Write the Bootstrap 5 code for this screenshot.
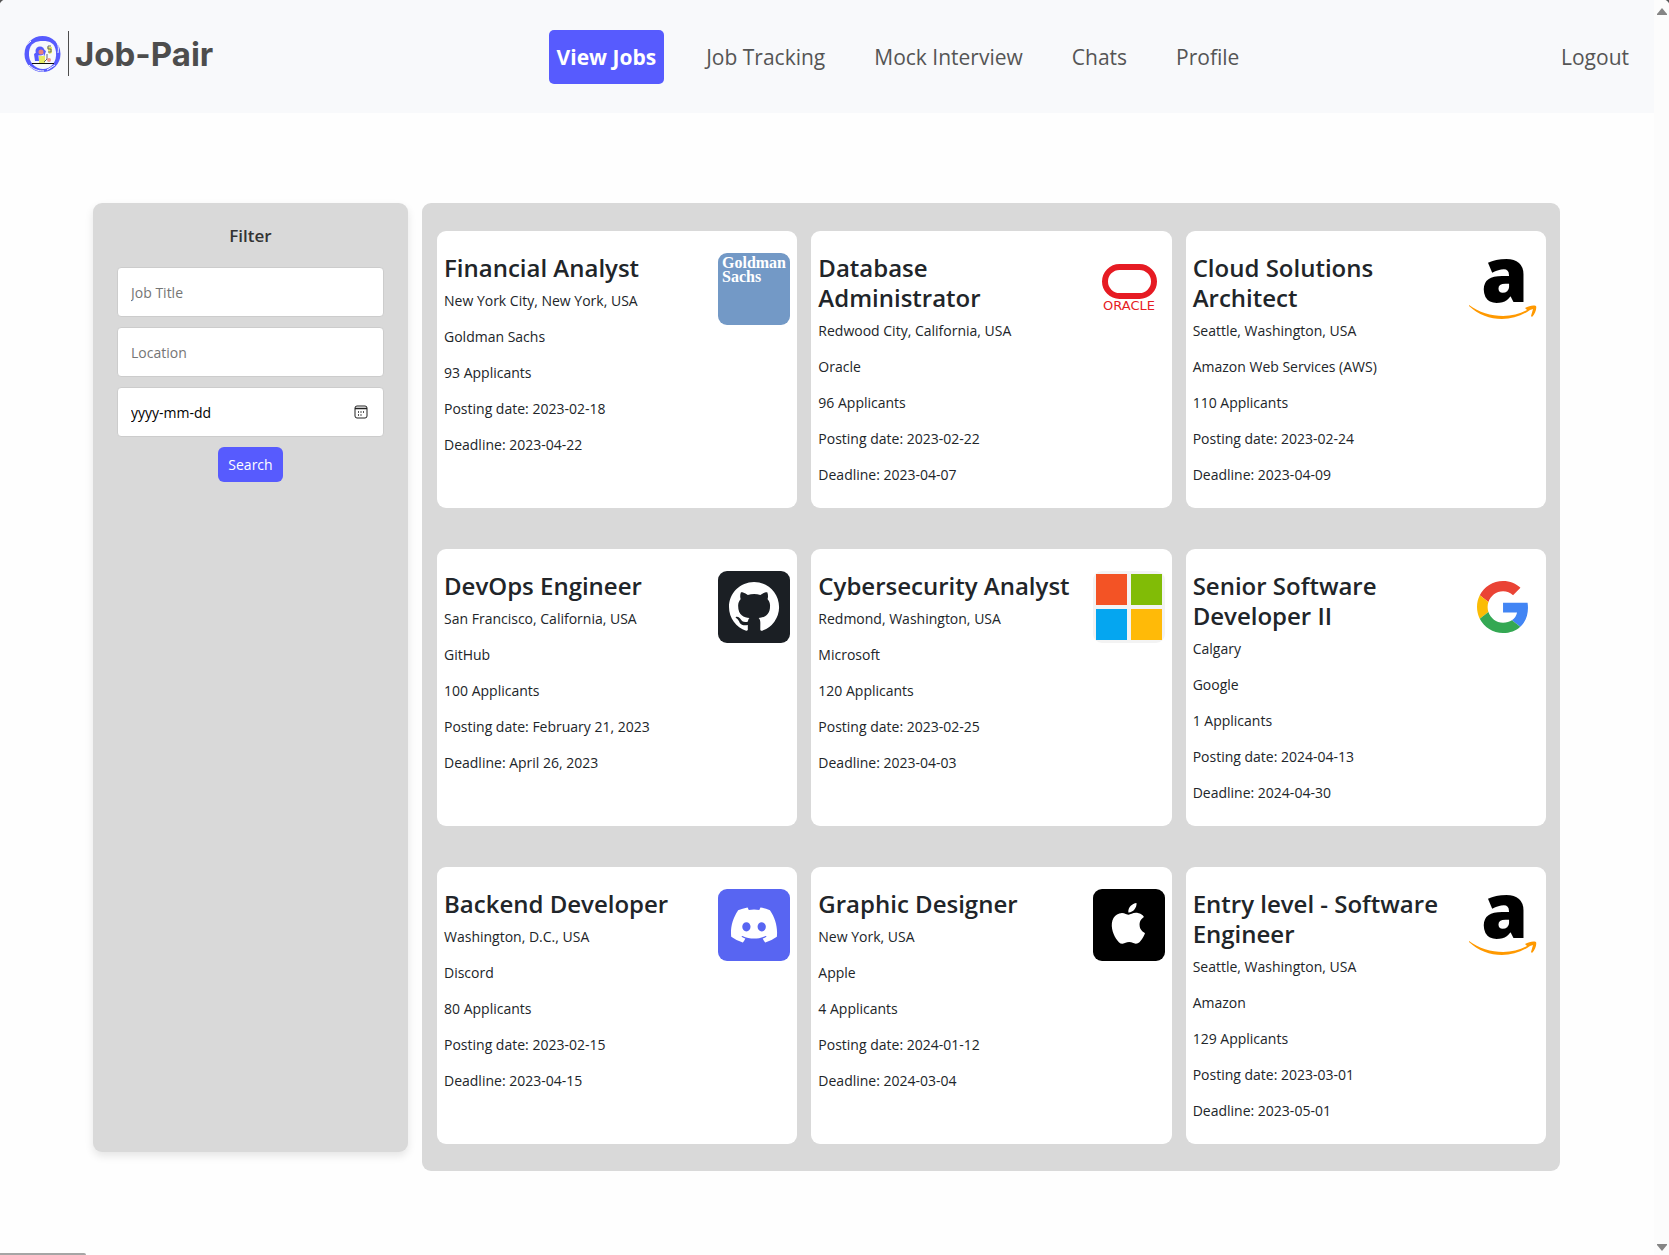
<!DOCTYPE html>
<html lang="en">
<head>
<meta charset="utf-8">
<meta name="viewport" content="width=device-width, initial-scale=1">
<title>Job-Pair</title>
<link href="https://cdn.jsdelivr.net/npm/bootstrap@5.3.0/dist/css/bootstrap.min.css" rel="stylesheet">
<style>
  body { font-family: "Open Sans", "Noto Sans", sans-serif; font-size: 14px; line-height: 22px; color: #212529; background: #fefefe; }
  .topbar { background: #f8f9fb; height: 113px; padding: 0 25px 0 24px; }
  .brand-link { color: #4d4d4d; font: 700 33px/40px Inter, sans-serif; width: 210px; gap: 6px; margin-bottom: 6px; }
  .brand-rule { width: 1px; height: 45px; background: #4d4d4d; }
  .main-nav { gap: 35px; }
  .main-nav .nav-link, .logout-link { font-size: 21px; line-height: 30px; padding: 12px 7px; color: #555; border-radius: 5px; }
  .main-nav .nav-link.active { background: #575bfe; color: #fff; font-weight: 700; padding: 12px 8px; }
  .page-main { padding: 90px 94px 84px 93px; gap: 14px; }
  .filter-panel { flex: 0 0 315px; background: #d9d9d9; border-radius: 9px; padding: 22px 24px; margin-bottom: 19px; box-shadow: 0 4px 8px rgba(0,0,0,.1); gap: 10px; }
  .filter-panel h2 { font-size: 17px; line-height: 22px; font-weight: 600; color: #333; margin: 0 0 10px; }
  .filter-panel .form-control { height: 50px; padding: 0 13px; font-size: 14px; border: 1px solid #ccc; border-radius: 4px; background: #fff; }
  .filter-panel .form-control::placeholder { color: #757575; }
  .filter-panel .date-field::placeholder { color: #000; }
  .date-icon { right: 16px; top: 18px; width: 14px; height: 14px; line-height: 0; }
  .search-btn { background: #575bfe; color: #fff; font-size: 14px; line-height: 21px; padding: 7px 10px; border: 0; border-radius: 6px; }
  .jobs-panel { background: #d9d9d9; border-radius: 9px; padding: 28px 14px 27px 15px; }
  .jobs-grid { --bs-gutter-x: 14px; --bs-gutter-y: 41px; }
  .job-card { border: 0; border-radius: 9px; padding: 22px 7px 8px; background: #fff; }
  .job-card h3 { font-size: 24px; line-height: 30px; font-weight: 600; margin: 0 0 7px; }
  .job-card p { margin: 0 0 14px; }
  .job-logo { width: 72px; height: 72px; border-radius: 9px; flex: none; }
  .scroll-strip { position: fixed; top: 0; right: 0; bottom: 0; width: 15px; background: #fcfcfc; padding: 8px 0 3px; }
  .content-wrap { margin-right: 15px; }
  .status-bar { position: fixed; left: 0; bottom: 0; width: 86px; height: 2px; background: #a5a5a5; border-radius: 0 2px 0 0; }
  .corner { position: fixed; top: 0; width: 6px; height: 6px; z-index: 5; }
  .corner-left { left: 0; background: radial-gradient(circle at 100% 100%, transparent 6px, #555 7px); }
  .corner-right { right: 0; background: radial-gradient(circle at 0 100%, transparent 6px, #555 7px); }
</style>
</head>
<body>
<svg class="d-none">
  <symbol id="amazon" viewBox="0 0 72 72">
    <text x="14" y="49" font-family="Open Sans, sans-serif" font-weight="800" font-size="76">a</text>
    <path d="M2 52C19 65 45 66 60 57l-2-2c4-2 8-3 11-2 1 3-1 8-4 11l-1-1 2-7-3 1C45 70 19 69 2 53z" fill="#ff9900"/>
  </symbol>
</svg>
<div class="content-wrap">
  <header class="topbar d-flex align-items-center justify-content-between">
    <a class="brand-link d-flex align-items-center text-decoration-none" href="#">
      <svg width="38" height="40" viewBox="0 0 38 40" aria-hidden="true">
        <ellipse cx="18.500" cy="20" rx="18" ry="18" fill="#575bfe"/>
        <path d="M5 18C6 9 12 7 19 7s12 2 13 11c1 10-5 17-13 17S4 28 5 18z" fill="#f8f9fb"/>
        <path d="M2 11c2-1 3-2 5-4M31 5c3 5 4 8 3 14M5 31c4 4 8 6 15 6M23 36l8-5" stroke="#f8f9fb" fill="none"/>
        <circle cx="16" cy="17" r="4.500" fill="#575bfe"/><path d="M10 20l4-3 1 10h-4zM19 15l3 2-2 6z" fill="#575bfe"/>
        <circle cx="17" cy="18" r="2.500" fill="#e8837c"/>
        <path d="M15 22h6v7h-6zM23 13h5v6l-3 1z" fill="#e7ec63"/>
        <path d="M27 12h-3v3h3v3h-3M23 20v5l-3 3" fill="none" stroke="#666"/>
        <circle cx="25" cy="26" r="2" fill="#f4988b"/>
        <path d="M8 29.500h22" stroke="#111"/>
      </svg>
      <span class="brand-rule"></span>
      <span>Job-Pair</span>
    </a>
    <nav class="main-nav nav flex-nowrap">
      <a class="nav-link active" href="#" aria-current="page">View Jobs</a>
      <a class="nav-link" href="#">Job Tracking</a>
      <a class="nav-link" href="#">Mock Interview</a>
      <a class="nav-link" href="#">Chats</a>
      <a class="nav-link" href="#">Profile</a>
    </nav>
    <a class="logout-link text-decoration-none px-0" href="#">Logout</a>
  </header>

  <main class="page-main d-flex">
    <form class="filter-panel d-flex flex-column">
      <h2 class="text-center">Filter</h2>
      <input class="form-control" type="text" placeholder="Job Title" aria-label="Job Title">
      <input class="form-control" type="text" placeholder="Location" aria-label="Location">
      <div class="position-relative">
        <input class="form-control date-field" type="text" placeholder="yyyy-mm-dd" aria-label="Date">
        <button class="date-icon btn p-0 border-0 position-absolute" type="button" aria-label="Open calendar">
          <svg width="14" height="14" viewBox="0 0 14 14" fill="none" stroke="#222"><rect x="1" y="1" width="12" height="12" rx="2"/><path d="M1 3.500h12" stroke-width="1.500"/><path d="M4 7h1M6.500 7h1M9 7h1M4 10h1M6.500 10h1" stroke-width="1.500"/></svg>
        </button>
      </div>
      <button class="search-btn btn align-self-center" type="button">Search</button>
    </form>

    <section class="jobs-panel flex-grow-1">
      <div class="jobs-grid row row-cols-3">
        <div class="col"><article class="job-card card h-100 flex-row justify-content-between">
          <div><h3>Financial Analyst</h3><p>New York City, New York, USA</p><p>Goldman Sachs</p><p>93 Applicants</p><p>Posting date: 2023-02-18</p><p>Deadline: 2023-04-22</p></div>
          <svg class="job-logo" viewBox="0 0 72 72" role="img" aria-label="Goldman Sachs"><rect width="72" height="72" fill="#7399c6"/><g fill="#fff" font-family="Liberation Serif, serif" font-weight="700" font-size="16"><text x="4" y="15">Goldman</text><text x="4" y="29">Sachs</text></g></svg>
        </article></div>
        <div class="col"><article class="job-card card h-100 flex-row justify-content-between">
          <div><h3>Database Administrator</h3><p>Redwood City, California, USA</p><p>Oracle</p><p>96 Applicants</p><p>Posting date: 2023-02-22</p><p>Deadline: 2023-04-07</p></div>
          <svg class="job-logo" viewBox="0 0 72 72" role="img" aria-label="Oracle"><rect x="12" y="14" width="49" height="29" rx="14.500" fill="none" stroke="#e61b23" stroke-width="6"/><text x="36" y="57" text-anchor="middle" fill="#e61b23" font-family="DejaVu Sans" font-size="13">ORACLE</text></svg>
        </article></div>
        <div class="col"><article class="job-card card h-100 flex-row justify-content-between">
          <div><h3>Cloud Solutions Architect</h3><p>Seattle, Washington, USA</p><p>Amazon Web Services (AWS)</p><p>110 Applicants</p><p>Posting date: 2023-02-24</p><p>Deadline: 2023-04-09</p></div>
          <svg class="job-logo" role="img" aria-label="Amazon"><use href="#amazon"/></svg>
        </article></div>
        <div class="col"><article class="job-card card h-100 flex-row justify-content-between">
          <div><h3>DevOps Engineer</h3><p>San Francisco, California, USA</p><p>GitHub</p><p>100 Applicants</p><p>Posting date: February 21, 2023</p><p>Deadline: April 26, 2023</p></div>
          <svg class="job-logo" viewBox="0 0 72 72" role="img" aria-label="GitHub"><rect width="72" height="72" fill="#1b1f24"/><path transform="translate(11 11) scale(3.130)" fill="#fff" d="M8 0C3.580 0 0 3.580 0 8c0 3.540 2.290 6.530 5.470 7.590.4.070.55-.17.55-.38 0-.19-.01-.82-.01-1.490-2.010.37-2.530-.49-2.690-.94-.09-.23-.48-.94-.82-1.130-.28-.15-.68-.52-.01-.53.63-.01 1.080.58 1.230.82.72 1.210 1.870.87 2.330.66.07-.52.28-.87.51-1.070-1.780-.2-3.640-.89-3.640-3.950 0-.87.31-1.590.82-2.150-.08-.2-.36-1.020.08-2.120 0 0 .67-.21 2.200.82.64-.18 1.320-.27 2-.27s1.360.09 2 .27c1.530-1.040 2.200-.82 2.200-.82.44 1.100.16 1.920.08 2.120.51.56.82 1.270.82 2.150 0 3.070-1.870 3.750-3.650 3.950.29.25.54.73.54 1.480 0 1.070-.01 1.930-.01 2.200 0 .21.15.46.55.38A8.010 8.010 0 0 0 16 8c0-4.420-3.580-8-8-8"/></svg>
        </article></div>
        <div class="col"><article class="job-card card h-100 flex-row justify-content-between">
          <div><h3>Cybersecurity Analyst</h3><p>Redmond, Washington, USA</p><p>Microsoft</p><p>120 Applicants</p><p>Posting date: 2023-02-25</p><p>Deadline: 2023-04-03</p></div>
          <svg class="job-logo" viewBox="0 0 72 72" role="img" aria-label="Microsoft"><rect width="72" height="72" fill="#f3f3f3"/><path d="M3 3h31v31H3z" fill="#f35325"/><path d="M38 3h31v31H38z" fill="#81bc06"/><path d="M3 38h31v31H3z" fill="#05a6f0"/><path d="M38 38h31v31H38z" fill="#ffba08"/></svg>
        </article></div>
        <div class="col"><article class="job-card card h-100 flex-row justify-content-between">
          <div><h3>Senior Software Developer II</h3><p>Calgary</p><p>Google</p><p>1 Applicants</p><p>Posting date: 2024-04-13</p><p>Deadline: 2024-04-30</p></div>
          <svg class="job-logo" viewBox="0 0 72 72" role="img" aria-label="Google"><g transform="translate(10 10) scale(1.085)"><path fill="#EA4335" d="M24 9.500c3.540 0 6.710 1.220 9.210 3.600l6.850-6.850C35.900 2.380 30.470 0 24 0 14.620 0 6.510 5.380 2.560 13.220l7.980 6.190C12.430 13.720 17.740 9.500 24 9.500z"/><path fill="#4285F4" d="M46.980 24.550c0-1.570-.15-3.090-.38-4.550H24v9.020h12.940c-.58 2.960-2.260 5.480-4.780 7.180l7.730 6c4.510-4.180 7.090-10.360 7.090-17.650z"/><path fill="#FBBC05" d="M10.530 28.590c-.48-1.450-.76-2.990-.76-4.590s.27-3.140.76-4.590l-7.980-6.190C.92 16.460 0 20.120 0 24c0 3.880.92 7.540 2.560 10.780l7.970-6.190z"/><path fill="#34A853" d="M24 48c6.480 0 11.930-2.130 15.890-5.810l-7.730-6c-2.150 1.450-4.920 2.300-8.160 2.300-6.260 0-11.570-4.220-13.470-9.910l-7.980 6.190C6.510 42.620 14.620 48 24 48z"/></g></svg>
        </article></div>
        <div class="col"><article class="job-card card h-100 flex-row justify-content-between">
          <div><h3>Backend Developer</h3><p>Washington, D.C., USA</p><p>Discord</p><p>80 Applicants</p><p>Posting date: 2023-02-15</p><p>Deadline: 2023-04-15</p></div>
          <svg class="job-logo" viewBox="0 0 72 72" role="img" aria-label="Discord"><rect width="72" height="72" fill="#5865f2"/><path transform="translate(13 13) scale(2.880)" fill="#fff" d="M13.545 2.907a13.200 13.200 0 0 0-3.257-1.011.050.050 0 0 0-.052.025c-.141.250-.297.577-.406.833a12.200 12.200 0 0 0-3.658 0 8 8 0 0 0-.412-.833.050.050 0 0 0-.052-.025c-1.125.194-2.220.534-3.257 1.011a.040.040 0 0 0-.021.018C.356 6.024-.213 9.047.066 12.032q.003.022.021.037a13.300 13.300 0 0 0 3.995 2.020.050.050 0 0 0 .056-.019q.463-.630.818-1.329a.050.050 0 0 0-.010-.059l-.018-.011a9 9 0 0 1-1.248-.595.050.050 0 0 1-.020-.066l.015-.019q.127-.095.248-.195a.050.050 0 0 1 .051-.007c2.619 1.196 5.454 1.196 8.041 0a.050.050 0 0 1 .053.007q.121.100.248.195a.050.050 0 0 1-.004.085 8 8 0 0 1-1.249.594.050.050 0 0 0-.030.030.050.050 0 0 0 .003.041c.240.465.515.909.817 1.329a.050.050 0 0 0 .056.019 13.200 13.200 0 0 0 4.001-2.020.050.050 0 0 0 .021-.037c.334-3.451-.559-6.449-2.366-9.106a.030.030 0 0 0-.020-.019m-8.198 7.307c-.789 0-1.438-.724-1.438-1.612s.637-1.613 1.438-1.613c.807 0 1.450.730 1.438 1.613 0 .888-.637 1.612-1.438 1.612m5.316 0c-.788 0-1.438-.724-1.438-1.612s.637-1.613 1.438-1.613c.807 0 1.451.730 1.438 1.613 0 .888-.631 1.612-1.438 1.612"/></svg>
        </article></div>
        <div class="col"><article class="job-card card h-100 flex-row justify-content-between">
          <div><h3>Graphic Designer</h3><p>New York, USA</p><p>Apple</p><p>4 Applicants</p><p>Posting date: 2024-01-12</p><p>Deadline: 2024-03-04</p></div>
          <svg class="job-logo" viewBox="0 0 72 72" role="img" aria-label="Apple"><rect width="72" height="72"/><path transform="translate(15 14) scale(1.700)" fill="#fff" d="M12.152 6.896c-.948 0-2.415-1.078-3.960-1.040-2.040.027-3.910 1.183-4.961 3.014-2.117 3.675-.546 9.103 1.519 12.090 1.013 1.454 2.208 3.090 3.792 3.039 1.520-.065 2.090-.987 3.935-.987 1.831 0 2.350.987 3.960.948 1.637-.026 2.676-1.480 3.676-2.948 1.156-1.688 1.636-3.325 1.662-3.415-.039-.013-3.182-1.221-3.220-4.857-.026-3.040 2.480-4.494 2.597-4.559-1.429-2.090-3.623-2.324-4.390-2.376-2-.156-3.675 1.090-4.610 1.090zM15.530 3.830c.843-1.012 1.400-2.427 1.245-3.830-1.207.052-2.662.805-3.532 1.818-.780.896-1.454 2.338-1.273 3.714 1.338.104 2.715-.688 3.559-1.701"/></svg>
        </article></div>
        <div class="col"><article class="job-card card h-100 flex-row justify-content-between">
          <div><h3>Entry level - Software Engineer</h3><p>Seattle, Washington, USA</p><p>Amazon</p><p>129 Applicants</p><p>Posting date: 2023-03-01</p><p>Deadline: 2023-05-01</p></div>
          <svg class="job-logo" role="img" aria-label="Amazon"><use href="#amazon"/></svg>
        </article></div>
      </div>
    </section>
  </main>
</div>

<div class="scroll-strip d-flex flex-column justify-content-between align-items-center" aria-hidden="true">
  <svg width="10" height="8" viewBox="0 0 10 8"><path d="M5 0l5 6v1H0V6z" fill="#858585"/></svg>
  <svg width="10" height="8" viewBox="0 0 10 8"><path d="M5 7L0 1V0h10v1z" fill="#858585"/></svg>
</div>
<div class="corner corner-left"></div>
<div class="corner corner-right"></div>
<div class="status-bar"></div>
<script src="https://cdn.jsdelivr.net/npm/bootstrap@5.3.0/dist/js/bootstrap.bundle.min.js"></script>
</body>
</html>
